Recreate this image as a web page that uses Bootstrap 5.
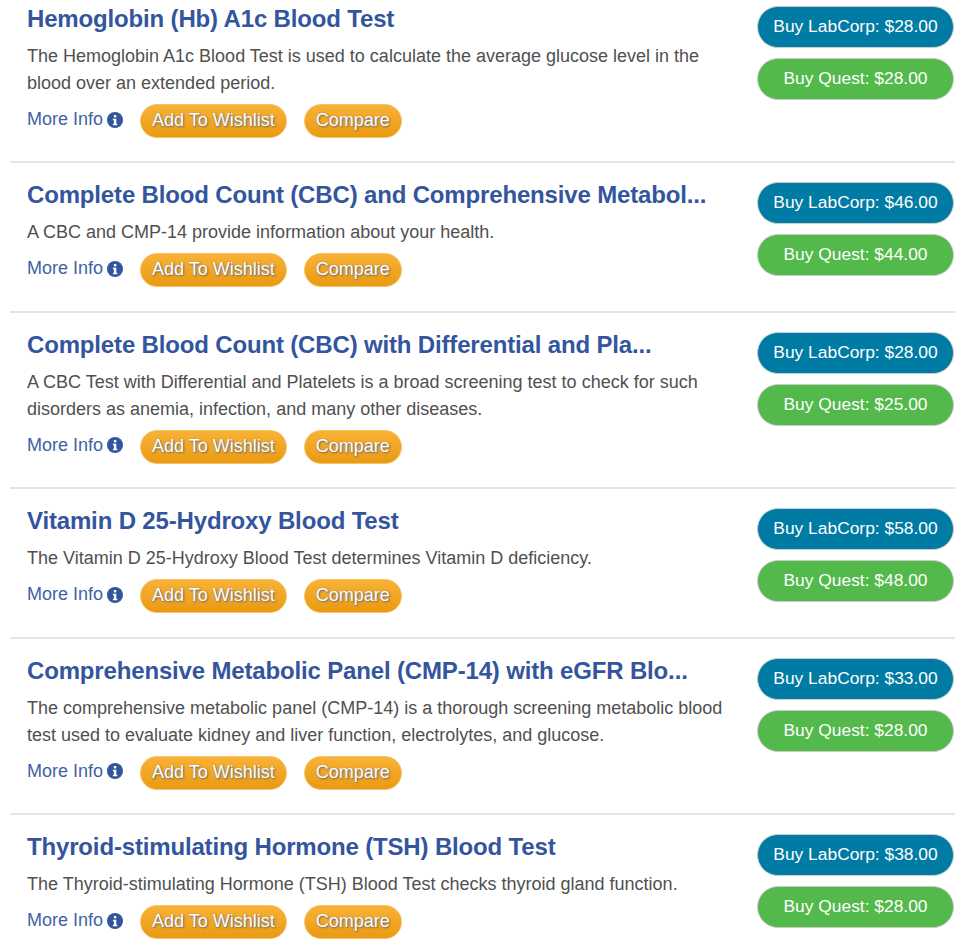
<!DOCTYPE html>
<html lang="en"><head><meta charset="utf-8"><title>Lab tests</title>
<link href="https://cdn.jsdelivr.net/npm/bootstrap@5.3.0/dist/css/bootstrap.min.css" rel="stylesheet">
<style>
body{font-family:"Liberation Sans",Arial,sans-serif;background:#fff;overflow:hidden}
.test-list{margin:0 17px 0 10px}
.test-item{border-bottom:2px solid #e4e4e4;padding:16px 0 23.5px}
.test-item:first-child{padding:3px 0 23px}
.test-item:last-child{border-bottom:0}
.test-main{width:720px;padding-left:17px}
.test-title{font-size:24px;line-height:32px;font-weight:700;color:#33559d;margin:0 0 8px;white-space:nowrap;letter-spacing:-.16px}
.test-desc{font-size:18px;line-height:27px;color:#505050;margin:0 0 7px}
.action-row{gap:17px}
.more-link{font-size:18px;color:#3f62a6;text-decoration:none;display:flex;align-items:center;gap:4px;padding-bottom:3px}
.pill-orange{background:linear-gradient(#f8b236,#ea9a12);color:#fff;font-size:18px;line-height:20px;border:1px solid #f5c26a;border-radius:17px;padding:5px 11px 7px;text-shadow:1px 1px 2px #6b6b6b,0 0 1px #8a7a60}
.buy-col{width:197px;margin:3px 1px 0 0}
.pill-buy{color:#fff;font-size:17.4px;line-height:22px;height:42px;border-radius:21px;padding:8px 0 10px;border:1px solid #ccc;width:197px}
.pill-buy:hover{color:#fff}
.buy-lab{background:#007ba3}
.buy-quest{background:#52b94a}
.buy-stack{gap:10px}
</style></head><body>
<div class="test-list">
<div class="test-item d-flex justify-content-between">
 <div class="test-main"><h3 class="test-title">Hemoglobin (Hb) A1c Blood Test</h3><p class="test-desc">The Hemoglobin A1c Blood Test is used to calculate the average glucose level in the blood over an extended period.</p>
 <div class="d-flex align-items-center action-row"><a class="more-link" href="#">More Info <svg width="16" height="16" viewBox="0 0 16 16"><circle cx="8" cy="8" r="8" fill="#33559d"/><rect x="6.9" y="3" width="2.4" height="2.4" fill="#fff"/><path d="M5.9 6.8h3.4v5h1v1.4H5.9v-1.4h1v-3.6h-1z" fill="#fff"/></svg></a><a class="btn pill-orange" href="#">Add To Wishlist</a><a class="btn pill-orange" href="#">Compare</a></div></div>
 <div class="buy-col d-flex flex-column buy-stack"><a class="btn pill-buy buy-lab" href="#">Buy LabCorp: $28.00</a><a class="btn pill-buy buy-quest" href="#">Buy Quest: $28.00</a></div>
</div>
<div class="test-item d-flex justify-content-between">
 <div class="test-main"><h3 class="test-title">Complete Blood Count (CBC) and Comprehensive Metabol...</h3><p class="test-desc">A CBC and CMP-14 provide information about your health.</p>
 <div class="d-flex align-items-center action-row"><a class="more-link" href="#">More Info <svg width="16" height="16" viewBox="0 0 16 16"><circle cx="8" cy="8" r="8" fill="#33559d"/><rect x="6.9" y="3" width="2.4" height="2.4" fill="#fff"/><path d="M5.9 6.8h3.4v5h1v1.4H5.9v-1.4h1v-3.6h-1z" fill="#fff"/></svg></a><a class="btn pill-orange" href="#">Add To Wishlist</a><a class="btn pill-orange" href="#">Compare</a></div></div>
 <div class="buy-col d-flex flex-column buy-stack"><a class="btn pill-buy buy-lab" href="#">Buy LabCorp: $46.00</a><a class="btn pill-buy buy-quest" href="#">Buy Quest: $44.00</a></div>
</div>
<div class="test-item d-flex justify-content-between">
 <div class="test-main"><h3 class="test-title">Complete Blood Count (CBC) with Differential and Pla...</h3><p class="test-desc">A CBC Test with Differential and Platelets is a broad screening test to check for such disorders as anemia, infection, and many other diseases.</p>
 <div class="d-flex align-items-center action-row"><a class="more-link" href="#">More Info <svg width="16" height="16" viewBox="0 0 16 16"><circle cx="8" cy="8" r="8" fill="#33559d"/><rect x="6.9" y="3" width="2.4" height="2.4" fill="#fff"/><path d="M5.9 6.8h3.4v5h1v1.4H5.9v-1.4h1v-3.6h-1z" fill="#fff"/></svg></a><a class="btn pill-orange" href="#">Add To Wishlist</a><a class="btn pill-orange" href="#">Compare</a></div></div>
 <div class="buy-col d-flex flex-column buy-stack"><a class="btn pill-buy buy-lab" href="#">Buy LabCorp: $28.00</a><a class="btn pill-buy buy-quest" href="#">Buy Quest: $25.00</a></div>
</div>
<div class="test-item d-flex justify-content-between">
 <div class="test-main"><h3 class="test-title">Vitamin D 25-Hydroxy Blood Test</h3><p class="test-desc">The Vitamin D 25-Hydroxy Blood Test determines Vitamin D deficiency.</p>
 <div class="d-flex align-items-center action-row"><a class="more-link" href="#">More Info <svg width="16" height="16" viewBox="0 0 16 16"><circle cx="8" cy="8" r="8" fill="#33559d"/><rect x="6.9" y="3" width="2.4" height="2.4" fill="#fff"/><path d="M5.9 6.8h3.4v5h1v1.4H5.9v-1.4h1v-3.6h-1z" fill="#fff"/></svg></a><a class="btn pill-orange" href="#">Add To Wishlist</a><a class="btn pill-orange" href="#">Compare</a></div></div>
 <div class="buy-col d-flex flex-column buy-stack"><a class="btn pill-buy buy-lab" href="#">Buy LabCorp: $58.00</a><a class="btn pill-buy buy-quest" href="#">Buy Quest: $48.00</a></div>
</div>
<div class="test-item d-flex justify-content-between">
 <div class="test-main"><h3 class="test-title">Comprehensive Metabolic Panel (CMP-14) with eGFR Blo...</h3><p class="test-desc">The comprehensive metabolic panel (CMP-14) is a thorough screening metabolic blood test used to evaluate kidney and liver function, electrolytes, and glucose.</p>
 <div class="d-flex align-items-center action-row"><a class="more-link" href="#">More Info <svg width="16" height="16" viewBox="0 0 16 16"><circle cx="8" cy="8" r="8" fill="#33559d"/><rect x="6.9" y="3" width="2.4" height="2.4" fill="#fff"/><path d="M5.9 6.8h3.4v5h1v1.4H5.9v-1.4h1v-3.6h-1z" fill="#fff"/></svg></a><a class="btn pill-orange" href="#">Add To Wishlist</a><a class="btn pill-orange" href="#">Compare</a></div></div>
 <div class="buy-col d-flex flex-column buy-stack"><a class="btn pill-buy buy-lab" href="#">Buy LabCorp: $33.00</a><a class="btn pill-buy buy-quest" href="#">Buy Quest: $28.00</a></div>
</div>
<div class="test-item d-flex justify-content-between">
 <div class="test-main"><h3 class="test-title">Thyroid-stimulating Hormone (TSH) Blood Test</h3><p class="test-desc">The Thyroid-stimulating Hormone (TSH) Blood Test checks thyroid gland function.</p>
 <div class="d-flex align-items-center action-row"><a class="more-link" href="#">More Info <svg width="16" height="16" viewBox="0 0 16 16"><circle cx="8" cy="8" r="8" fill="#33559d"/><rect x="6.9" y="3" width="2.4" height="2.4" fill="#fff"/><path d="M5.9 6.8h3.4v5h1v1.4H5.9v-1.4h1v-3.6h-1z" fill="#fff"/></svg></a><a class="btn pill-orange" href="#">Add To Wishlist</a><a class="btn pill-orange" href="#">Compare</a></div></div>
 <div class="buy-col d-flex flex-column buy-stack"><a class="btn pill-buy buy-lab" href="#">Buy LabCorp: $38.00</a><a class="btn pill-buy buy-quest" href="#">Buy Quest: $28.00</a></div>
</div>
</div>
<script src="https://cdn.jsdelivr.net/npm/bootstrap@5.3.0/dist/js/bootstrap.bundle.min.js"></script>
</body></html>
